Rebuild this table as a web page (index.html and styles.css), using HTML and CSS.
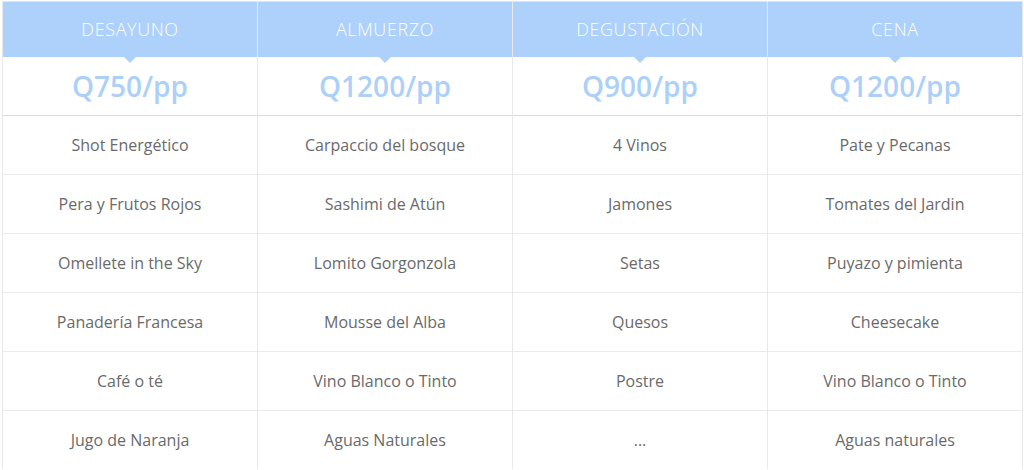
FILE: index.html
```html
<!DOCTYPE html>
<html lang="es">
<head>
<meta charset="utf-8">
<title>Menú</title>
<link rel="stylesheet" href="styles.css">
</head>
<body>
<div class="pricing">
  <div class="plan">
    <div class="plan-head">DESAYUNO</div>
    <div class="plan-price">Q750/pp</div>
    <ul class="plan-items">
      <li>Shot Energético</li>
      <li>Pera y Frutos Rojos</li>
      <li>Omellete in the Sky</li>
      <li>Panadería Francesa</li>
      <li>Café o té</li>
      <li>Jugo de Naranja</li>
    </ul>
  </div>
  <div class="plan">
    <div class="plan-head">ALMUERZO</div>
    <div class="plan-price">Q1200/pp</div>
    <ul class="plan-items">
      <li>Carpaccio del bosque</li>
      <li>Sashimi de Atún</li>
      <li>Lomito Gorgonzola</li>
      <li>Mousse del Alba</li>
      <li>Vino Blanco o Tinto</li>
      <li>Aguas Naturales</li>
    </ul>
  </div>
  <div class="plan">
    <div class="plan-head">DEGUSTACIÓN</div>
    <div class="plan-price">Q900/pp</div>
    <ul class="plan-items">
      <li>4 Vinos</li>
      <li>Jamones</li>
      <li>Setas</li>
      <li>Quesos</li>
      <li>Postre</li>
      <li>...</li>
    </ul>
  </div>
  <div class="plan">
    <div class="plan-head">CENA</div>
    <div class="plan-price">Q1200/pp</div>
    <ul class="plan-items">
      <li>Pate y Pecanas</li>
      <li>Tomates del Jardin</li>
      <li>Puyazo y pimienta</li>
      <li>Cheesecake</li>
      <li>Vino Blanco o Tinto</li>
      <li>Aguas naturales</li>
    </ul>
  </div>
</div>
</body>
</html>
```
FILE: styles.css
```css
html, body {
  margin: 0;
  padding: 0;
  background: #ffffff;
}
body {
  font-family: "Open Sans", "Liberation Sans", sans-serif;
}
.pricing {
  display: grid;
  grid-template-columns: repeat(4, 255px);
  margin: 1px 0 0 2px;
  border-top: 1px solid #e4e4e4;
  border-right: 1px solid #e8e8e8;
  width: max-content;
}
.plan {
  border-left: 1px solid #e8e8e8;
  display: flex;
  flex-direction: column;
}
.plan-head {
  position: relative;
  height: 55px;
  background: #add1fa;
  color: #ffffff;
  font-family: "Open Sans", sans-serif;
  font-weight: 300;
  font-size: 18px;
  letter-spacing: 0.6px;
  display: flex;
  align-items: center;
  justify-content: center;
  padding-bottom: 1px;
  box-sizing: border-box;
}
.plan-head::after {
  content: "";
  position: absolute;
  left: 50%;
  bottom: -6px;
  margin-left: -6px;
  border-left: 6px solid transparent;
  border-right: 6px solid transparent;
  border-top: 6px solid #add1fa;
}
.plan-price {
  height: 59px;
  border-bottom: 1px solid #c9def5;
  color: #acd0f9;
  font-family: "Open Sans", sans-serif;
  font-weight: 600;
  font-size: 28px;
  display: flex;
  align-items: center;
  justify-content: center;
  padding-top: 0;
  box-sizing: border-box;
}
.plan-items {
  list-style: none;
  margin: 0;
  padding: 0;
}
.plan-items li {
  height: 58px;
  border-bottom: 1px solid #ebebeb;
  display: flex;
  align-items: center;
  justify-content: center;
  color: #6a6a6a;
  font-size: 16px;
  padding-bottom: 1px;
  box-sizing: content-box;
  height: 57px;
}
.plan-items li:last-child {
  border-bottom: none;
}
```
